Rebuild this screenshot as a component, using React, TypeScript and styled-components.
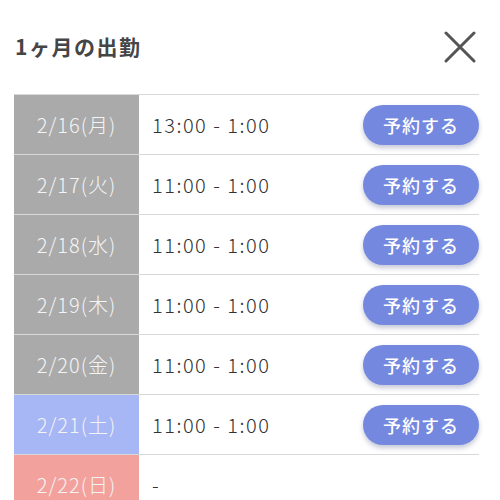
import {FC} from 'react';
import styled, {createGlobalStyle} from 'styled-components';

type DayKind = 'weekday' | 'sat' | 'sun';

interface ShiftRow {
	date: string;
	kind: DayKind;
	time: string;
	bookable: boolean;
}

const rows: ShiftRow[] = [
	{date: '2/16(月)', kind: 'weekday', time: '13:00 - 1:00', bookable: true},
	{date: '2/17(火)', kind: 'weekday', time: '11:00 - 1:00', bookable: true},
	{date: '2/18(水)', kind: 'weekday', time: '11:00 - 1:00', bookable: true},
	{date: '2/19(木)', kind: 'weekday', time: '11:00 - 1:00', bookable: true},
	{date: '2/20(金)', kind: 'weekday', time: '11:00 - 1:00', bookable: true},
	{date: '2/21(土)', kind: 'sat', time: '11:00 - 1:00', bookable: true},
	{date: '2/22(日)', kind: 'sun', time: '-', bookable: false},
];

const dayColors: Record<DayKind, string> = {
	weekday: '#aaaaaa',
	sat: '#a7b6f4',
	sun: '#f3a19c',
};

const App: FC = () => {
	return (
		<>
			<GlobalStyle />
			<Sheet>
				<Header>
					<Title>1ヶ月の出勤</Title>
					<CloseButton aria-label="閉じる">
						<svg width="32" height="32" viewBox="0 0 32 32">
							<path
								d="M2 2 L30 30 M30 2 L2 30"
								stroke="#555"
								strokeWidth="3"
								strokeLinecap="round"
							/>
						</svg>
					</CloseButton>
				</Header>
				<Table>
					{rows.map((row) => (
						<Row key={row.date}>
							<DateCell $kind={row.kind}>{row.date}</DateCell>
							<TimeCell>
								<TimeText>{row.time}</TimeText>
								{row.bookable && <ReserveButton>予約する</ReserveButton>}
							</TimeCell>
						</Row>
					))}
				</Table>
			</Sheet>
		</>
	);
};

const GlobalStyle = createGlobalStyle`
	body {
		margin: 0;
		background: #fff;
		font-family: 'Noto Sans CJK JP', 'Noto Sans', sans-serif;
		overflow: hidden;
	}
`;

const Sheet = styled.div`
	padding: 0 21px 0 14px;
	height: 500px;
	overflow: hidden;
`;

const Header = styled.div`
	display: flex;
	align-items: center;
	justify-content: space-between;
	height: 94px;
	padding-right: 3px;
`;

const Title = styled.h1`
	margin: 0;
	font-size: 21px;
	font-weight: 700;
	color: #454545;
	letter-spacing: 1.5px;
	padding: 0 0 2px 1px;
`;

const CloseButton = styled.button`
	display: flex;
	border: 0;
	padding: 0;
	background: none;
`;

const Table = styled.div`
	border-top: 1px solid #d8d8d8;
`;

const Row = styled.div`
	display: grid;
	grid-template-columns: 125px 1fr;
	height: 59px;
	border-bottom: 1px solid #d8d8d8;
`;

const DateCell = styled.div<{$kind: DayKind}>`
	display: flex;
	align-items: center;
	justify-content: center;
	background: ${({$kind}) => dayColors[$kind]};
	color: #f4f4f4;
	font-size: 20px;
	font-weight: 300;
	letter-spacing: 1px;
`;

const TimeCell = styled.div`
	display: flex;
	align-items: center;
	justify-content: space-between;
	padding-left: 13px;
`;

const TimeText = styled.span`
	font-size: 20px;
	font-weight: 300;
	color: #333;
	letter-spacing: 1.5px;
`;

const ReserveButton = styled.button`
	width: 116px;
	height: 40px;
	border: 0;
	border-radius: 20px;
	background: #7488e0;
	color: #fff;
	font-family: inherit;
	font-size: 18px;
	font-weight: 500;
	letter-spacing: 1px;
	box-shadow: 0 3px 5px rgba(60, 70, 120, 0.3);
`;

export default App;
